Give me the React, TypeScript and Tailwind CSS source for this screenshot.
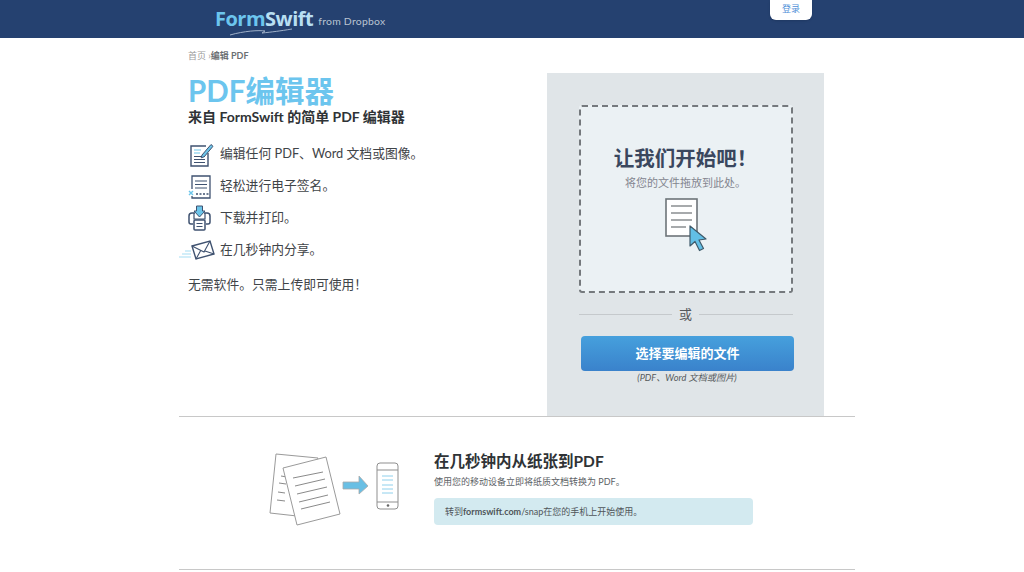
import React from 'react';

const cjk = { fontFamily: 'Lato, "Noto Sans CJK SC", sans-serif' };

function EditIcon() {
  return (
    <svg width="26" height="26" viewBox="0 0 26 26" fill="none">
      <path d="M18 5H3v20h17V12" stroke="#3f5270" strokeWidth="1.4" />
      <path d="M6 9h7M6 12h6" stroke="#6cc5ea" strokeWidth="1.2" />
      <path d="M6 15.5h11M6 18.5h11M6 21.5h11" stroke="#3f5270" strokeWidth="1.2" />
      <path d="M14 14l9-10.5 2 1.8-8.8 10.5-3 1z" fill="#6cc5ea" stroke="#3f5270" strokeWidth="1" />
    </svg>
  );
}

function SignIcon() {
  return (
    <svg width="26" height="26" viewBox="0 0 26 26" fill="none">
      <path d="M4 16V3h18v22H4v-2" stroke="#3f5270" strokeWidth="1.3" />
      <path d="M7 8h12M7 11.5h12M7 15h12" stroke="#3f5270" strokeWidth="1.2" />
      <path d="M1 18l4 4M5 18l-4 4" stroke="#6cc5ea" strokeWidth="1.4" />
      <path d="M8 21h13" stroke="#3f5270" strokeWidth="1.3" strokeDasharray="2 1.5" />
    </svg>
  );
}

function PrintIcon() {
  return (
    <svg width="23" height="26" viewBox="0 0 23 26" fill="none">
      <path d="M5 19H3a2 2 0 0 1-2-2v-6a3 3 0 0 1 3-3h3M16 8h3a3 3 0 0 1 3 3v6a2 2 0 0 1-2 2h-2" stroke="#3f5270" strokeWidth="1.5" />
      <path d="M6 8v6h11V8" stroke="#3f5270" strokeWidth="1.2" />
      <path d="M8.5 1h6v5h2.500l-5.500 6-5.500-6h2.500z" fill="#6cc5ea" stroke="#3f5270" strokeWidth="1" />
      <rect x="6" y="15" width="11" height="10" rx="1" fill="#fff" stroke="#3f5270" strokeWidth="1.5" />
      <path d="M8.500 18.500h6M8.500 21.500h6" stroke="#3f5270" strokeWidth="1.2" />
    </svg>
  );
}

function MailIcon() {
  return (
    <svg width="36" height="20" viewBox="0 0 36 20" fill="none">
      <path d="M13 6l18-5 4 13-18 5z" fill="#fff" stroke="#3f5270" strokeWidth="1.4" />
      <path d="M13 6l12 6 6-11M17 19l5-9M35 14l-9-3" stroke="#3f5270" strokeWidth="1.1" />
      <path d="M6 11h6M3 14h9M0 17h12" stroke="#a6def4" strokeWidth="1.1" />
    </svg>
  );
}

function DocCursor() {
  return (
    <svg width="44" height="54" viewBox="0 0 44 54">
      <rect x="1" y="1" width="31" height="37" fill="#fff" stroke="#6d7478" strokeWidth="1.6" />
      <path d="M6 8h21M6 15h21M6 22h21M6 29h15" stroke="#50565a" strokeWidth="1.2" />
      <path d="M25 28l0 20 5-4.5 4.500 9 4-2-4.500-8.500 7-1z" fill="#62bfe6" stroke="#3f5a6a" strokeWidth="1.2" strokeLinejoin="round" />
    </svg>
  );
}

function SnapArt() {
  return (
    <svg width="134" height="76" viewBox="0 0 134 76" fill="none">
      <path d="M7 1L49 5 28 63 1 60z" fill="#fff" stroke="#9a9a9a" strokeWidth="1" />
      <path d="M12 23l6 1M10 30l7 1M9 39l7 1M8 47l8 1" stroke="#8a8a8a" strokeWidth="1" />
      <path d="M14 15L57 4 71 61 28 72z" fill="#fff" stroke="#9a9a9a" strokeWidth="1" />
      <path d="M24 25l30-6M26 33l30-7M28 41l30-7M30 49l29-7M32 56l29-7" stroke="#8a8a8a" strokeWidth="1" />
      <path d="M74 29h16v-6l9 10-9 8v-5H74z" fill="#69bfe4" stroke="#a9a9a9" strokeWidth=".8" />
      <rect x="108" y="10" width="21" height="46" rx="3" fill="#fff" stroke="#8f8f8f" strokeWidth="1" />
      <path d="M108 17h21M108 49h21" stroke="#8f8f8f" strokeWidth="1" />
      <circle cx="119" cy="52.500" r="1.300" fill="#666" />
      <path d="M113 23h11M113 27h11M113 32h11M113 36h11M113 40h11" stroke="#8fd0ec" strokeWidth="1" />
    </svg>
  );
}

function Feature({ icon, text }: { icon: React.ReactNode; text: string }) {
  return (
    <div className="flex items-center h-8 text-[12.8px] text-[#3f4448]">
      <div className="w-8 flex justify-start">{icon}</div>
      <span>{text}</span>
    </div>
  );
}

export default function App() {
  return (
    <div className="min-h-[572px] bg-white overflow-hidden" style={cjk}>
      {/* Header */}
      <div className="h-[38px] bg-[#254170] flex justify-between pl-[215px] pr-[212px]">
        <div className="flex items-start pt-[5px]">
          <div className="relative">
            <span className="text-[20px] leading-[27px] font-bold text-[#6cc5ee] tracking-tight" style={{ fontFamily: '"Open Sans", sans-serif' }}>
              Form<span className="text-[#b8dff2]">Swift</span>
            </span>
            <svg className="absolute left-[14px] top-[23px]" width="70" height="8" viewBox="0 0 70 8" fill="none">
              <path d="M1 7C15 3 30 2 36 3l-3 2c10-1 18-2 30-4" stroke="#9fb0c8" strokeWidth="1" />
            </svg>
          </div>
          <span className="text-[10.4px] text-[#b9c3d2] ml-[5px] mt-[9px] tracking-wide">from Dropbox</span>
        </div>
        <button className="w-[42px] h-5 pb-[2px] bg-white rounded-b-md text-[9px] text-[#4f8fd8] shadow-sm">登录</button>
      </div>

      <div className="w-[676px] ml-[179px]">
        <div className="flex border-b border-[#c8c8c8] h-[379px]">
          {/* Left column */}
          <div className="w-[368px] pl-[9px]">
            <div className="pt-[11px] h-[35px] text-[9px] leading-[13px] text-[#9a9a9a]">
              首页 ›<span className="font-bold text-[#6b6f73]">编辑 PDF</span>
            </div>
            <h1 className="text-[29.5px] leading-[35px] font-bold text-[#6cc5ee]">PDF编辑器</h1>
            <h2 className="text-[14px] leading-[18px] font-bold text-[#2f3336] mb-[12px]">来自 FormSwift 的简单 PDF 编辑器</h2>
            <Feature icon={<EditIcon />} text="编辑任何 PDF、Word 文档或图像。" />
            <Feature icon={<SignIcon />} text="轻松进行电子签名。" />
            <Feature icon={<PrintIcon />} text="下载并打印。" />
            <div className="flex items-center h-8 text-[12.8px] text-[#3f4448] -ml-[9px]">
              <div className="w-[41px]"><MailIcon /></div>
              <span>在几秒钟内分享。</span>
            </div>
            <p className="mt-[8px] text-[12.8px] leading-5 text-[#3f4448]">无需软件。只需上传即可使用！</p>
          </div>

          {/* Upload panel */}
          <div className="w-[277px] mt-[35px] bg-[#e0e5e8] px-8 pt-8 flex flex-col items-center">
            <div className="w-[214px] h-[188px] shrink-0 bg-[#ebf1f4] border-2 border-dashed border-[#75797d] rounded-[3px] flex flex-col items-center pt-[37px]">
              <div className="text-[20.5px] leading-7 font-bold text-[#3a475e]">让我们开始吧！</div>
              <div className="text-[11px] leading-[16px] text-[#83858f] mt-[3px] mb-[7px]">将您的文件拖放到此处。</div>
              <div className="ml-[3px]"><DocCursor /></div>
            </div>
            <div className="w-[214px] flex items-center gap-[7px] mt-[11px] text-[13px] leading-[20px] text-[#55595c]">
              <div className="flex-1 h-px bg-[#c5c9cc]" />
              <span>或</span>
              <div className="flex-1 h-px bg-[#c5c9cc]" />
            </div>
            <button className="w-[213px] h-[35px] mt-[12px] ml-[4px] rounded-sm bg-gradient-to-b from-[#46a0dd] to-[#3a82cb] text-white text-[13px] font-bold shrink-0">
              选择要编辑的文件
            </button>
            <div className="text-[9.2px] leading-[13px] italic text-[#55595c] ml-[3px]">(PDF、Word 文档或图片)</div>
          </div>
        </div>

        {/* Snap section */}
        <div className="h-[153px] border-b border-[#c8c8c8] flex pl-[90px] pt-[36px]">
          <div className="w-[165px]"><SnapArt /></div>
          <div>
            <h3 className="text-[15.5px] leading-[18px] font-bold text-[#2f3336] mt-[-1px]">在几秒钟内从纸张到PDF</h3>
            <p className="text-[9px] leading-[13px] text-[#5d6266] mt-[5px]">使用您的移动设备立即将纸质文档转换为 PDF。</p>
            <div className="w-[319px] h-[27px] mt-[10px] bg-[#d3eaf0] rounded-sm pl-[11px] flex items-center text-[9px] text-[#4f5559]">
              转到<span className="font-bold">formswift.com</span>/snap在您的手机上开始使用。
            </div>
          </div>
        </div>
      </div>
    </div>
  );
}
